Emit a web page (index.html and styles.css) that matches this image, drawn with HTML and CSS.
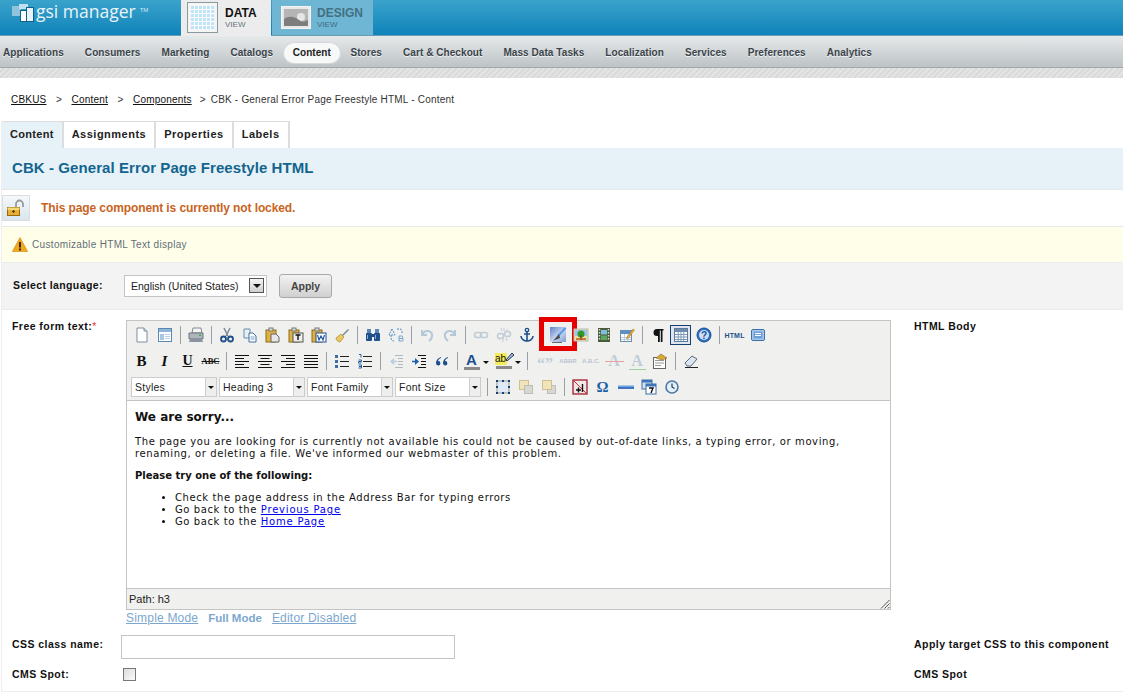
FILE: index.html
```html
<!DOCTYPE html>
<html lang="en">
<head>
  <meta charset="UTF-8">
  <title>GSI Manager - Content</title>
  <link rel="stylesheet" href="styles.css">
</head>
<body>

  <div class="topbar">
    <div class="logo">
      <svg class="logo-icon" width="24" height="22" viewBox="0 0 24 22">
        <rect x="1" y="4" width="9" height="10" fill="#8fc4dc"/>
        <rect x="8" y="2" width="9" height="5" fill="#bfe0ee"/>
        <rect x="9.500" y="8.500" width="6" height="11" fill="#fff" stroke="#0d5f8c"/>
        <rect x="15.500" y="5.500" width="7" height="14" fill="#e8f2f7" stroke="#0d5f8c"/>
      </svg>
      <span class="logo-text">gsi manager</span><span class="logo-tm">TM</span>
    </div>
    <div class="view-tab view-data">
      <svg class="view-icon" width="31" height="31" viewBox="0 0 31 31">
        <rect x=".5" y=".5" width="30" height="30" fill="#f4f6f6" stroke="#8b9aa0"/>
        <rect x="4" y="4" width="23" height="23" fill="#bfe4f7"/>
        <path d="M7.500 4v23M11.500 4v23M15.500 4v23M19.500 4v23M23.500 4v23M4 7.500h23M4 11.500h23M4 15.500h23M4 19.500h23M4 23.500h23" stroke="#fff" fill="none"/>
      </svg>
      <div class="view-label"><b>DATA</b><span>VIEW</span></div>
    </div>
    <div class="view-tab view-design">
      <svg class="view-icon" width="30" height="23" viewBox="0 0 30 23">
        <rect x=".5" y=".5" width="29" height="22" fill="#e8e8e8" stroke="#f4f4f4"/>
        <rect x="3" y="3" width="24" height="17" fill="#b5b5b5"/>
        <circle cx="20" cy="11" r="4" fill="#e6e6e6"/>
        <path d="M3 13c6-4 11-2 15 1s6 1 9 0v6H3z" fill="#7d7d7d"/>
      </svg>
      <div class="view-label"><b>DESIGN</b><span>VIEW</span></div>
    </div>
  </div>

  <nav class="mainnav">
    <a>Applications</a>
    <a>Consumers</a>
    <a>Marketing</a>
    <a>Catalogs</a>
    <a class="active">Content</a>
    <a>Stores</a>
    <a>Cart &amp; Checkout</a>
    <a>Mass Data Tasks</a>
    <a>Localization</a>
    <a>Services</a>
    <a>Preferences</a>
    <a>Analytics</a>
  </nav>
  <div class="hatch"></div>

  <div class="breadcrumb">
    <a>CBKUS</a><i>&gt;</i><a>Content</a><i>&gt;</i><a>Components</a><i class="last">&gt;</i><span>CBK - General Error Page Freestyle HTML - Content</span>
  </div>

  <div class="page">
    <div class="tabs">
      <div class="tab current">Content</div>
      <div class="tab">Assignments</div>
      <div class="tab">Properties</div>
      <div class="tab">Labels</div>
    </div>

    <h1 class="title">CBK - General Error Page Freestyle HTML</h1>

    <div class="lockrow">
      <div class="lockbtn">
        <svg width="20" height="18" viewBox="0 0 20 18">
          <path d="M10 8V5a3.500 3.500 0 0 1 7 0v3" fill="none" stroke="#9a9a9a" stroke-width="1.800"/>
          <rect x="1.500" y="8.500" width="12" height="8" fill="#e8b032" stroke="#9a6a10"/>
          <rect x="1.500" y="8.500" width="12" height="2.500" fill="#f6d878"/>
          <path d="M7.500 11v3M6 12.500h3" stroke="#5c3d08" stroke-width="1.200"/>
        </svg>
      </div>
      <span>This page component is currently not locked.</span>
    </div>

    <div class="notice">
      <svg width="16" height="15" viewBox="0 0 16 15">
        <path d="M8 .5 15.700 14.500H.3z" fill="#f2a81d" stroke="#d08a10" stroke-width=".6"/>
        <rect x="7" y="5" width="2" height="5.500" fill="#3a2a05"/>
        <rect x="7" y="11.500" width="2" height="2" fill="#3a2a05"/>
      </svg>
      <span>Customizable HTML Text display</span>
    </div>

    <div class="langrow">
      <label class="lbl lang-lbl">Select language:</label>
      <div class="langselect"><span>English (United States)</span><i class="langarrow"></i></div>
      <button class="applybtn">Apply</button>
    </div>

    <div class="formrow freeform">
      <label class="lbl ff-lbl">Free form text:<em>*</em></label>
      <div class="editorcol">
        <div class="editor">
          <div class="toolbar">

            <div class="tbrow">
              <span class="b"><svg viewBox="0 0 16 16"><path d="M3 1h7l3 3v11H3z" fill="#fff" stroke="#7c8ea0"/><path d="M10 1v3h3" fill="#d5e0ea" stroke="#7c8ea0"/></svg></span>
              <span class="b"><svg viewBox="0 0 16 16"><rect x="1.500" y="1.500" width="13" height="13" fill="#fff" stroke="#5b87b4"/><rect x="2" y="2" width="12" height="3" fill="#8eb4d8"/><rect x="3" y="7" width="4" height="6" fill="#a9c6e2"/><path d="M8 7.500h5M8 9.500h5M8 11.500h5" stroke="#b9cde0"/></svg></span>
              <i class="sep"></i>
              <span class="b"><svg viewBox="0 0 16 16"><path d="M5 1h8l1 5H4z" fill="#f4f4f4" stroke="#7f8a94"/><path d="M1 6h14v6H1z" fill="#aeb6bd" stroke="#6d7780"/><path d="M2 12h12l1 3H1z" fill="#8b949c"/><rect x="11" y="7.500" width="2" height="1.500" fill="#37b34a"/></svg></span>
              <i class="sep"></i>
              <span class="b"><svg viewBox="0 0 16 16"><path d="M5 1l4 8M11 1 7 9" stroke="#7d8a96" stroke-width="1.500"/><circle cx="4.500" cy="12" r="2.500" fill="none" stroke="#1d4f8c" stroke-width="1.800"/><circle cx="11.500" cy="12" r="2.500" fill="none" stroke="#1d4f8c" stroke-width="1.800"/></svg></span>
              <span class="b"><svg viewBox="0 0 16 16"><path d="M2 2h6v9H2z" fill="#e6eef6" stroke="#6a8db0"/><path d="M7 6h4l3 3v6H7z" fill="#fff" stroke="#3d70a4"/><path d="M8.500 10h4M8.500 12h4" stroke="#7ba0c4"/></svg></span>
              <span class="b"><svg viewBox="0 0 16 16"><rect x="1" y="3" width="10" height="12" fill="#e0b040" stroke="#8a6c1c"/><rect x="4" y="1" width="4" height="3" fill="#ddd" stroke="#777"/><path d="M6 7h5l3 3v5H6z" fill="#e6e6e6" stroke="#666"/></svg></span>
              <span class="b"><svg viewBox="0 0 16 16"><rect x="1" y="3" width="10" height="12" fill="#e0b040" stroke="#8a6c1c"/><rect x="4" y="1" width="4" height="3" fill="#ddd" stroke="#777"/><rect x="5" y="6" width="10" height="9" fill="#eee" stroke="#555"/><path d="M7.500 8h5M10 8v5" stroke="#111" stroke-width="1.400"/></svg></span>
              <span class="b"><svg viewBox="0 0 16 16"><rect x="1" y="3" width="10" height="12" fill="#e0b040" stroke="#8a6c1c"/><rect x="4" y="1" width="4" height="3" fill="#ddd" stroke="#777"/><rect x="5" y="6" width="10" height="9" fill="#fff" stroke="#1d4f9c"/><path d="M6.500 8l1.500 5 2-4 2 4 1.500-5" fill="none" stroke="#1d4f9c" stroke-width="1.100"/></svg></span>
              <span class="b"><svg viewBox="0 0 16 16"><path d="M8 8l6-6 1 1-6 6z" fill="#7d8a96"/><path d="M2 11l5-4 3 3-4 5c-2 0-4-2-4-4z" fill="#e8c860" stroke="#a98a2a" stroke-width=".7"/></svg></span>
              <i class="sep"></i>
              <span class="b"><svg viewBox="0 0 16 16"><rect x="2" y="2" width="4" height="4" fill="#5a86b8"/><rect x="10" y="2" width="4" height="4" fill="#5a86b8"/><rect x="1" y="6" width="6" height="8" rx="1" fill="#1d4f8c"/><rect x="9" y="6" width="6" height="8" rx="1" fill="#1d4f8c"/><rect x="7" y="7" width="2" height="3" fill="#1d4f8c"/><path d="M2.500 8v4M10.500 8v4" stroke="#8ab0d8"/></svg></span>
              <span class="b"><svg viewBox="0 0 16 16"><path d="M4 2 1 8h6zM3 8v3a3 3 0 0 0 3 3" fill="none" stroke="#4d8bc4" stroke-dasharray="2 1"/><path d="M9 2h3a2 2 0 0 1 2 2v2" fill="none" stroke="#4d8bc4" stroke-dasharray="2 1"/><path d="M11 9h2.500a1.200 1.200 0 0 1 0 2.500H11zM11 11.500h3a1.200 1.200 0 0 1 0 2.500h-3z" fill="none" stroke="#6b9ccb" stroke-width=".9"/></svg></span>
              <i class="sep"></i>
              <span class="b"><svg viewBox="0 0 16 16"><path d="M3 3v5h5M3.500 8A5 5 0 0 1 13 7c.6 2.500-.5 5-3 7" fill="none" stroke="#b5c8da" stroke-width="2"/></svg></span>
              <span class="b"><svg viewBox="0 0 16 16"><path d="M13 3v5H8M12.500 8A5 5 0 0 0 3 7c-.6 2.500.5 5 3 7" fill="none" stroke="#b5c8da" stroke-width="2"/></svg></span>
              <i class="sep"></i>
              <span class="b"><svg viewBox="0 0 16 16"><rect x="1.500" y="5.500" width="7" height="5" rx="2.500" fill="none" stroke="#c0ccd6" stroke-width="1.500"/><rect x="7.500" y="5.500" width="7" height="5" rx="2.500" fill="none" stroke="#c0ccd6" stroke-width="1.500"/></svg></span>
              <span class="b"><svg viewBox="0 0 16 16"><rect x="1.500" y="6.500" width="6" height="5" rx="2.500" fill="none" stroke="#c0ccd6" stroke-width="1.500"/><rect x="8.500" y="4.500" width="6" height="5" rx="2.500" fill="none" stroke="#c0ccd6" stroke-width="1.500"/><path d="M5 1l1 3M10 11l1 3M8 1v3M7 11v4M12 2l-2 2M3 13l2-2" stroke="#c0ccd6"/></svg></span>
              <span class="b"><svg viewBox="0 0 16 16"><circle cx="8" cy="3" r="1.700" fill="none" stroke="#1d4f8c" stroke-width="1.300"/><path d="M8 5v9M5 7h6M2 9c0 3 3 5 6 5s6-2 6-5" fill="none" stroke="#1d4f8c" stroke-width="1.600"/></svg></span>
              <i class="sep"></i>
              <span class="b hilite"><svg viewBox="0 0 18 18"><defs><linearGradient id="imgfill" x1="0" y1="0" x2="1" y2="1"><stop offset="0" stop-color="#5f80c8"/><stop offset=".55" stop-color="#c8d8f0"/><stop offset="1" stop-color="#7f9ad0"/></linearGradient></defs><rect x="1" y="1" width="16" height="15" fill="url(#imgfill)"/><path d="M16.500 2 9 10" stroke="#5f9ae8" stroke-width="2.400"/><path d="M10 8 4 15l7-3z" fill="#4a4a4a"/><path d="M3 16.500h10" stroke="#666"/></svg><i class="redbox"></i></span>
              <span class="b"><svg viewBox="0 0 16 16"><rect x="1" y="2" width="14" height="12" fill="#e8e2a0" stroke="#b8b8b8"/><rect x="2" y="3" width="12" height="6" fill="#9cc6e8"/><circle cx="8" cy="7" r="3.500" fill="#2f9a2a"/><path d="M8 8v5" stroke="#7a4a18" stroke-width="1.500"/><path d="M3 12h10" stroke="#c05a20" stroke-width="1.500"/></svg></span>
              <span class="b"><svg viewBox="0 0 16 16"><rect x="2" y="1" width="12" height="14" fill="#4a5a3a"/><rect x="5" y="3" width="6" height="4.500" fill="#7ac0d8"/><rect x="5" y="8.500" width="6" height="4.500" fill="#5aa860"/><path d="M3.500 2v12M12.500 2v12" stroke="#ddd" stroke-dasharray="1.500 1.500" stroke-width="1.500"/></svg></span>
              <span class="b"><svg viewBox="0 0 16 16"><rect x="1.500" y="3.500" width="11" height="11" fill="#fff" stroke="#6a8db0"/><rect x="2" y="4" width="10" height="3" fill="#5b8fc8"/><path d="M2 10.500h10M2 12.500h10M5.500 7v7M9 7v7" stroke="#a9c0d6" stroke-width=".8"/><path d="M8 10l6-8 1.500 1-6 8-2 .7z" fill="#e8a838" stroke="#a8701c" stroke-width=".5"/></svg></span>
              <i class="sep"></i>
              <span class="b"><svg viewBox="0 0 16 16"><path d="M12 2H7a3.500 3.500 0 0 0 0 7h1v6h1.800V3.500h1V15H12.500V3.500H13.500V2z" fill="#111"/></svg></span>
              <span class="b selected"><svg viewBox="0 0 16 16"><rect x="1.500" y="1.500" width="13" height="13" fill="#fff" stroke="#5d7c9c"/><rect x="2" y="2" width="12" height="3" fill="#6e8cac"/><path d="M2 7.500h12M2 10h12M2 12.500h12M5.200 5v9M8 5v9M10.800 5v9" stroke="#7d9ab8"/></svg></span>
              <span class="b"><svg viewBox="0 0 16 16"><circle cx="8" cy="8" r="7" fill="#2a6fc8" stroke="#1a4f98"/><circle cx="8" cy="8" r="5" fill="#cfe0f5"/><text x="8" y="11.500" class="help-q">?</text></svg></span>
              <i class="sep"></i>
              <span class="b html-b">HTML</span>
              <span class="b"><svg viewBox="0 0 16 16"><rect x="1.500" y="2.500" width="13" height="11" rx="1.500" fill="#a9c8ea" stroke="#3d70a4"/><rect x="3.500" y="4.500" width="9" height="7" fill="#6e9fd6"/><path d="M5 6.500h6M5 8.500h6" stroke="#fff"/></svg></span>
            </div>

            <div class="tbrow">
              <span class="b txt-b serif">B</span>
              <span class="b txt-i serif">I</span>
              <span class="b txt-u serif">U</span>
              <span class="b txt-s serif">ABC</span>
              <i class="sep"></i>
              <span class="b"><svg viewBox="0 0 16 16"><path d="M1 2.500h14M1 5.500h9M1 8.500h14M1 11.500h9M1 14.500h14" stroke="#111"/></svg></span>
              <span class="b"><svg viewBox="0 0 16 16"><path d="M1 2.500h14M3.500 5.500h9M1 8.500h14M3.500 11.500h9M1 14.500h14" stroke="#111"/></svg></span>
              <span class="b"><svg viewBox="0 0 16 16"><path d="M1 2.500h14M6 5.500h9M1 8.500h14M6 11.500h9M1 14.500h14" stroke="#111"/></svg></span>
              <span class="b"><svg viewBox="0 0 16 16"><path d="M1 2.500h14M1 5.500h14M1 8.500h14M1 11.500h14M1 14.500h14" stroke="#111"/></svg></span>
              <i class="sep"></i>
              <span class="b"><svg viewBox="0 0 16 16"><path d="M6 3.500h9M6 8.500h9M6 13.500h9" stroke="#222"/><rect x="1" y="2" width="3" height="3" fill="#3d6fa4"/><rect x="1" y="7" width="3" height="3" fill="#3d6fa4"/><rect x="1" y="12" width="3" height="3" fill="#3d6fa4"/></svg></span>
              <span class="b"><svg viewBox="0 0 16 16"><path d="M6 3.500h9M6 8.500h9M6 13.500h9" stroke="#222"/><path d="M2 1.500h2v3M1.500 7h3v1.500h-3V10h3M1.500 12h3v3h-3M2 13.500h2" fill="none" stroke="#2a5f9c"/></svg></span>
              <i class="sep"></i>
              <span class="b"><svg viewBox="0 0 16 16"><path d="M7 2.500h8M10 5.500h5M10 8.500h5M10 11.500h5M7 14.500h8" stroke="#b0b8c0"/><path d="M6 5 2 8.500 6 12z" fill="#b8cee4"/><path d="M6 8.500h3" stroke="#b8cee4" stroke-width="1.500"/></svg></span>
              <span class="b"><svg viewBox="0 0 16 16"><path d="M7 2.500h8M10 5.500h5M10 8.500h5M10 11.500h5M7 14.500h8" stroke="#111"/><path d="M4 5l4 3.500L4 12z" fill="#1d5fa8"/><path d="M1 8.500h4" stroke="#1d5fa8" stroke-width="1.500"/></svg></span>
              <span class="b"><svg viewBox="0 0 16 16"><path d="M7 4C4 5 2 7 2 10a2.200 2.200 0 1 0 2-2c0-1 1.500-2.500 3-3zM14 4c-3 1-5 3-5 6a2.200 2.200 0 1 0 2-2c0-1 1.500-2.500 3-3z" fill="#1d4f8c"/></svg></span>
              <i class="sep"></i>
              <span class="b color-b"><span class="a-letter">A</span><i class="swatch"></i></span><i class="caret"></i>
              <span class="b color-b"><span class="ab-letter">ab</span><i class="swatch"></i><svg class="pen" viewBox="0 0 10 10"><path d="M2 8 8 1l2 2-7 6z" fill="#9cc0e0" stroke="#335"/></svg></span><i class="caret"></i>
              <i class="sep sep-narrow"></i>
              <span class="b txt-q">“”</span>
              <span class="b txt-abbr">ABBR</span>
              <span class="b txt-abbr">A.B.C.</span>
              <span class="b a-off a-del">A</span>
              <span class="b a-off a-ins">A</span>
              <span class="b"><svg viewBox="0 0 16 16"><rect x="1.500" y="4.500" width="12" height="11" fill="#fff" stroke="#666"/><path d="M3 7.500h9M3 10h9M3 12.500h6" stroke="#999"/><path d="M4 5l5-4 6 4-5 2z" fill="#d8a838" stroke="#8a6c1c" stroke-width=".6"/></svg></span>
              <i class="sep"></i>
              <span class="b"><svg viewBox="0 0 16 16"><path d="M2 10 9 3l5 3-6 7H4z" fill="#dce6f0" stroke="#5a6a7a"/><path d="M2 14.500h13" stroke="#222"/></svg></span>
            </div>

            <div class="tbrow row3">
              <div class="listbox"><span>Styles</span><i class="lbarrow"></i></div>
              <div class="listbox"><span>Heading 3</span><i class="lbarrow"></i></div>
              <div class="listbox"><span>Font Family</span><i class="lbarrow"></i></div>
              <div class="listbox"><span>Font Size</span><i class="lbarrow"></i></div>
              <i class="sep"></i>
              <span class="b"><svg viewBox="0 0 16 16"><rect x="2" y="2" width="12" height="12" fill="#dfeaf6" stroke="#999"/><path d="M1 1h2v2H1zM7 1h2v2H7zM13 1h2v2h-2zM1 7h2v2H1zM13 7h2v2h-2zM1 13h2v2H1zM7 13h2v2H7zM13 13h2v2h-2z" fill="#16406f"/></svg></span>
              <span class="b"><svg viewBox="0 0 16 16"><rect x="1.500" y="1.500" width="9" height="9" fill="#f0e4b8" stroke="#cdbf98"/><rect x="6.500" y="6.500" width="8" height="8" fill="#d8d8d0" stroke="#bdbdb5"/></svg></span>
              <span class="b"><svg viewBox="0 0 16 16"><rect x="6.500" y="6.500" width="8" height="8" fill="#d8d8d0" stroke="#bdbdb5"/><rect x="1.500" y="1.500" width="9" height="9" fill="#f0e4b8" stroke="#cdbf98"/></svg></span>
              <i class="sep"></i>
              <span class="b"><svg viewBox="0 0 16 16"><rect x="1" y="1" width="14" height="14" fill="#f0e8e8" stroke="#a01c2c" stroke-width="1.300"/><path d="M2 2l12 12" stroke="#d02c3c"/><path d="M4 11h5M6.500 8.500v5M10.500 5v8" stroke="#111" stroke-width="1.400"/></svg></span>
              <span class="b omega">Ω</span>
              <span class="b"><svg viewBox="0 0 16 16"><rect x="0" y="6" width="16" height="4" fill="#3d75c4"/><rect x="0" y="6" width="16" height="1.500" fill="#a9c8ea"/></svg></span>
              <span class="b"><svg viewBox="0 0 16 16"><rect x="1" y="1" width="10" height="9" fill="#d5e2ee" stroke="#3d6fa4"/><rect x="1" y="1" width="10" height="2.500" fill="#3d75b8"/><rect x="5" y="5" width="10" height="10" fill="#fff" stroke="#3d6fa4"/><rect x="5" y="5" width="10" height="2.500" fill="#3d75b8"/><path d="M8 9h4l-2 5" fill="none" stroke="#111" stroke-width="1.400"/></svg></span>
              <span class="b"><svg viewBox="0 0 16 16"><circle cx="8" cy="8" r="6" fill="#e6eef6" stroke="#4a78a8" stroke-width="1.600"/><path d="M8 4.500V8l2.500 1.500" fill="none" stroke="#16406f" stroke-width="1.200"/></svg></span>
            </div>
          </div>

          <div class="editarea">
            <h3>We are sorry...</h3>
            <p>The page you are looking for is currently not available his could not be caused by out-of-date links, a typing error, or moving, renaming, or deleting a file. We've informed our webmaster of this problem.</p>
            <p class="try"><b>Please try one of the following:</b></p>
            <ul>
              <li>Check the page address in the Address Bar for typing errors</li>
              <li>Go back to the <a>Previous Page</a></li>
              <li>Go back to the <a>Home Page</a></li>
            </ul>
          </div>

          <div class="statusbar">Path: h3<svg class="grip" width="10" height="10" viewBox="0 0 10 10"><path d="M9.500 1 1 9.500M9.500 4.500 4.500 9.500M9.500 8 8 9.500" stroke="#555" fill="none"/></svg></div>
        </div>
        <div class="modes">
          <a>Simple Mode</a><b>Full Mode</b><a>Editor Disabled</a>
        </div>
      </div>
      <label class="lbl side-lbl">HTML Body</label>
    </div>

    <div class="formrow cssrow">
      <label class="lbl row-lbl">CSS class name:</label>
      <input class="textinput" type="text">
      <label class="lbl side-lbl">Apply target CSS to this component</label>
    </div>

    <div class="formrow cmsrow">
      <label class="lbl row-lbl">CMS Spot:</label>
      <input class="check" type="checkbox">
      <label class="lbl side-lbl">CMS Spot</label>
    </div>
  </div>

</body>
</html>
```

FILE: styles.css
```css
html, body {
  margin: 0;
  padding: 0;
  height: 698px;
  overflow: hidden;
  background: #fff;
}
body {
  font-family: "Liberation Sans", Arial, sans-serif;
  font-size: 11px;
  color: #222;
}

/* top bar */
.topbar {
  display: flex;
  height: 36px;
  background: linear-gradient(#3ba3cb, #0f83ba);
  box-sizing: border-box;
  border-bottom: 1px solid #6a9db5;
}
.logo {
  width: 181px;
  display: flex;
  align-items: flex-start;
  color: #fff;
  padding: 0 0 0 11px;
  box-sizing: border-box;
}
.logo-icon {
  margin-top: 2px;
}
.logo-text {
  font-family: "Open Sans", sans-serif;
  font-size: 17.500px;
  line-height: 23px;
  margin-left: 1px;
  color: #e9f4f9;
}
.logo-tm {
  font-size: 6px;
  line-height: 20px;
  margin-left: 4px;
  color: #cfe6f0;
}
.view-tab {
  display: flex;
}
.view-data {
  width: 90px;
  height: 36px;
  background: #ececec;
  padding: 2px 0 0 6px;
  box-sizing: border-box;
}
.view-design {
  width: 101px;
  height: 35px;
  margin-left: 1px;
  background: #6fb6d5;
  padding: 6px 0 0 9px;
  box-sizing: border-box;
}
.view-label {
  margin-left: 7px;
  display: flex;
  flex-direction: column;
}
.view-label b {
  font-size: 12px;
  line-height: 14px;
  color: #111;
}
.view-label span {
  font-size: 8px;
  line-height: 9px;
  color: #68757b;
}
.view-data .view-label {
  padding-top: 4px;
}
.view-design .view-label {
  margin-left: 6px;
  padding-top: 0;
}
.view-design .view-label b {
  color: #44707f;
}
.view-design .view-label span {
  color: #3d6b7d;
}

/* main nav */
.mainnav {
  display: flex;
  align-items: center;
  height: 32px;
  box-sizing: border-box;
  padding-top: 3px;
  background: linear-gradient(#e6e9ea, #bdc3c6);
  border-bottom: 1px solid #a2a7aa;
}
.mainnav a {
  font-weight: bold;
  font-size: 10px;
  letter-spacing: .07px;
  color: #3b444a;
  text-shadow: 0 1px 0 #f2f4f5;
  padding: 0 10.500px;
  line-height: 20px;
}
.mainnav a:first-child {
  padding-left: 3px;
}
.mainnav a.active {
  background: #f7f9f9;
  border-radius: 11px;
  color: #222;
  text-shadow: none;
  box-shadow: 0 0 0 1px #d5d9db;
  padding: 0 9px;
  margin: 0;
}
.hatch {
  height: 10px;
  background: repeating-linear-gradient(135deg, #e4e4e4 0 2px, #dadada 2px 4px);
}

/* breadcrumb */
.breadcrumb {
  display: flex;
  height: 43px;
  padding: 15px 0 0 11px;
  box-sizing: border-box;
  font-size: 10px;
  line-height: 14px;
  letter-spacing: .2px;
  color: #333;
}
.breadcrumb a {
  color: #111;
  text-decoration: underline;
}
.breadcrumb i {
  font-style: normal;
  margin: 0 9.500px;
}
.breadcrumb i.last {
  margin: 0 5px 0 8px;
}

/* page */
.page {
  margin-left: 1px;
  border-left: 1px solid #eee;
}
.tabs {
  display: flex;
  height: 27px;
}
.tab {
  font-weight: bold;
  font-size: 11px;
  letter-spacing: .5px;
  line-height: 25px;
  padding: 0 8px;
  color: #222;
  border: 2px solid #ddd;
  border-width: 1px 2px 0 0;
}
.tab.current {
  background: #e6f2f7;
  letter-spacing: .3px;
}
.title {
  margin: 0;
  height: 42px;
  background: #e6f2f7;
  color: #13658f;
  font-size: 15px;
  line-height: 40px;
  padding-left: 10px;
  letter-spacing: .08px;
  box-sizing: border-box;
  border-bottom: 1px solid #e8e8e8;
}
.lockrow {
  display: flex;
  align-items: center;
  height: 37px;
  box-sizing: border-box;
  border-bottom: 1px solid #e8e8e8;
  color: #c8641e;
  font-weight: bold;
  font-size: 12px;
  letter-spacing: -.1px;
}
.lockbtn {
  width: 28px;
  height: 26px;
  margin-right: 11px;
  background: linear-gradient(#f4f8fb, #d8e6ef);
  border: 1px solid #ddd;
  display: flex;
  align-items: center;
  justify-content: center;
  box-sizing: border-box;
}
.notice {
  display: flex;
  align-items: center;
  gap: 4px;
  height: 36px;
  padding-left: 10px;
  background: #fffee8;
  font-size: 10px;
  letter-spacing: .33px;
  color: #5f6f7a;
  border-bottom: 1px solid #ececec;
  box-sizing: border-box;
}
.lbl {
  font-weight: bold;
  font-size: 10.500px;
  letter-spacing: .45px;
  color: #111;
}
.langrow {
  display: flex;
  align-items: center;
  height: 47px;
  padding-bottom: 1px;
  box-sizing: border-box;
  background: #f3f3f3;
  border-bottom: 1px solid #ececec;
}
.lang-lbl {
  width: 122px;
  padding: 0 0 2px 11px;
  box-sizing: border-box;
  letter-spacing: .4px;
}
.langselect {
  display: flex;
  align-items: center;
  justify-content: space-between;
  width: 143px;
  height: 22px;
  padding: 0 2px 0 6px;
  box-sizing: border-box;
  background: #fff;
  border: 1px solid #c4c4c4;
  font-size: 10.500px;
  color: #222;
}
.langarrow {
  position: relative;
  width: 15px;
  height: 15px;
  box-sizing: border-box;
  border: 1px solid #555;
  background: linear-gradient(#f4f4f4, #cfcfcf);
}
.langarrow::after {
  content: "";
  position: absolute;
  left: 3px;
  top: 5px;
  border: 4px solid transparent;
  border-top-color: #111;
  border-bottom-width: 0;
}
.applybtn {
  margin-left: 12px;
  width: 53px;
  height: 24px;
  padding: 0;
  background: linear-gradient(#f2f2f2, #d0d0d0);
  border: 1px solid #a8a8a8;
  border-radius: 3px;
  font: bold 10.500px "Liberation Sans", Arial, sans-serif;
  color: #444;
}

/* form rows */
.formrow {
  display: flex;
}
.freeform {
  height: 322px;
  padding-top: 10px;
  box-sizing: border-box;
}
.ff-lbl {
  width: 124px;
  padding-left: 10px;
  box-sizing: border-box;
}
.ff-lbl em {
  color: #e33;
  font-style: normal;
  font-weight: normal;
}
.editorcol {
  width: 765px;
}
.side-lbl {
  margin-left: 23px;
}
.editor {
  height: 290px;
  box-sizing: border-box;
  border: 1px solid #c4c4c4;
  background: #f0f0ee;
  display: flex;
  flex-direction: column;
}
.toolbar {
  height: 80px;
  padding: 1px 0 0 3px;
  box-sizing: border-box;
  border-bottom: 1px solid #c4c4c4;
  flex: none;
}
.tbrow {
  display: flex;
  align-items: center;
  height: 26px;
}
.row3 {
  padding-left: 1px;
}
.b {
  position: relative;
  width: 23px;
  height: 20px;
  display: flex;
  align-items: center;
  justify-content: center;
  flex: none;
  box-sizing: border-box;
}
.b svg {
  width: 16px;
  height: 16px;
}
.b.hilite svg {
  width: 18px;
  height: 18px;
}
.b.selected {
  width: 21px;
  margin: 0 1px;
  background: #dfe6f0;
  border: 1px solid #16406f;
}
.redbox {
  position: absolute;
  left: -7px;
  top: -8px;
  width: 38px;
  height: 34px;
  box-sizing: border-box;
  border: 5px solid #e60000;
}
.sep {
  display: block;
  flex: none;
  width: 1px;
  height: 18px;
  margin: 0 3.500px;
  background: #97a0a8;
}
.sep-narrow {
  margin: 0 5.500px 0 2px;
}
.serif {
  font-family: "Liberation Serif", serif;
  color: #111;
}
.txt-b {
  font-weight: bold;
  font-size: 15px;
}
.txt-i {
  font-weight: bold;
  font-style: italic;
  font-size: 15px;
}
.txt-u {
  font-weight: bold;
  font-size: 14px;
  text-decoration: underline;
}
.txt-s {
  font-size: 8.500px;
  text-decoration: line-through;
  font-weight: bold;
}
.color-b {
  width: 17px;
  margin-left: 2px;
  flex-direction: column;
}
.a-letter {
  font: bold 15px/13px "Liberation Sans", sans-serif;
  color: #1d4f8c;
}
.ab-letter {
  font: 10px/12px "Liberation Sans", sans-serif;
  color: #111;
  background: #f3ec5a;
  align-self: flex-start;
  padding-right: 1px;
}
.swatch {
  display: block;
  width: 16px;
  height: 3px;
  margin-top: 1px;
  background: #8a8a8a;
}
.b svg.pen {
  position: absolute;
  right: -2px;
  top: 1px;
  width: 10px;
  height: 10px;
}
.caret {
  flex: none;
  width: 0;
  height: 0;
  margin: 2px 4px 0 3px;
  border: 3px solid transparent;
  border-top-color: #111;
  border-bottom-width: 0;
}
.txt-q {
  font: bold 16px/20px "Liberation Serif", serif;
  color: #c2cedb;
  padding-top: 5px;
}
.txt-abbr {
  font: bold 6px "Liberation Sans", sans-serif;
  color: #b8c4d2;
}
.a-off {
  font: bold 16px "Liberation Serif", serif;
  color: #c0ccd8;
}
.a-del::after {
  content: "";
  position: absolute;
  left: 2px;
  right: 2px;
  top: 10px;
  height: 1px;
  background: #e8a0a0;
}
.a-ins::after {
  content: "";
  position: absolute;
  left: 3px;
  right: 3px;
  bottom: 1px;
  height: 1px;
  background: #a0d0a0;
}
.html-b {
  font: bold 7px "Liberation Sans", sans-serif;
  letter-spacing: .2px;
  color: #1d4f8c;
}
.help-q {
  font: bold 10px "Liberation Sans", sans-serif;
  fill: #1a4f98;
  text-anchor: middle;
}
.omega {
  font: bold 15px "Liberation Serif", serif;
  color: #1d5fa8;
}
.listbox {
  display: flex;
  width: 86px;
  height: 20px;
  margin-right: 2px;
  flex: none;
  box-sizing: border-box;
  border: 1px solid #ccc;
  background: #fff;
  font-size: 10.500px;
  letter-spacing: .25px;
  line-height: 18px;
  color: #222;
}
.listbox span {
  flex: 1;
  padding-left: 3px;
}
.lbarrow {
  position: relative;
  width: 10px;
  background: #eee;
  border-left: 1px solid #ccc;
}
.lbarrow::after {
  content: "";
  position: absolute;
  left: 2px;
  top: 8px;
  border: 3px solid transparent;
  border-top-color: #111;
  border-bottom-width: 0;
}

/* editing area */
.editarea {
  flex: 1;
  background: #fff;
  padding: 8px 8px 0 8px;
  font-family: "DejaVu Sans", Verdana, sans-serif;
  font-size: 10px;
  letter-spacing: .6px;
  line-height: 12px;
  color: #111;
}
.editarea h3 {
  margin: 0 0 11px;
  font-size: 12px;
  letter-spacing: 0;
  line-height: 16px;
}
.editarea p {
  margin: 0 0 10px;
}
.editarea b {
  letter-spacing: 0;
}
.editarea ul {
  margin: 0;
  padding-left: 40px;
}
.editarea a {
  color: #00e;
  letter-spacing: .8px;
  text-decoration: underline;
}
.statusbar {
  position: relative;
  height: 21px;
  flex: none;
  box-sizing: border-box;
  border-top: 1px solid #c4c4c4;
  padding-left: 2px;
  font-size: 11px;
  line-height: 20px;
  color: #222;
}
.grip {
  position: absolute;
  right: 0;
  bottom: 0;
}
.modes {
  display: flex;
  gap: 10px;
  font-size: 12px;
  letter-spacing: .2px;
  line-height: 14px;
  padding-top: 1px;
  color: #7ba7cf;
}
.modes a {
  text-decoration: underline;
}
.modes b {
  font-size: 11.500px;
  letter-spacing: 0;
}
.cssrow {
  align-items: center;
  height: 30px;
}
.cssrow .lbl {
  padding-bottom: 6px;
}
.row-lbl {
  width: 119px;
  padding-left: 10px;
  box-sizing: border-box;
}
.textinput {
  width: 334px;
  height: 24px;
  padding: 0;
  margin: 0;
  box-sizing: border-box;
  border: 1px solid #c4c4c4;
  background: #fff;
}
.cssrow .side-lbl {
  margin-left: 459px;
}
.cmsrow {
  align-items: center;
  height: 30px;
  box-sizing: border-box;
  border-bottom: 1px solid #eee;
  padding-bottom: 5px;
}
.check {
  appearance: none;
  width: 13px;
  height: 13px;
  margin: 0 0 0 2px;
  box-sizing: border-box;
  border: 1px solid #777;
  background: linear-gradient(135deg, #ddd, #fafafa);
}
.cmsrow .side-lbl {
  margin-left: 778px;
}
```
